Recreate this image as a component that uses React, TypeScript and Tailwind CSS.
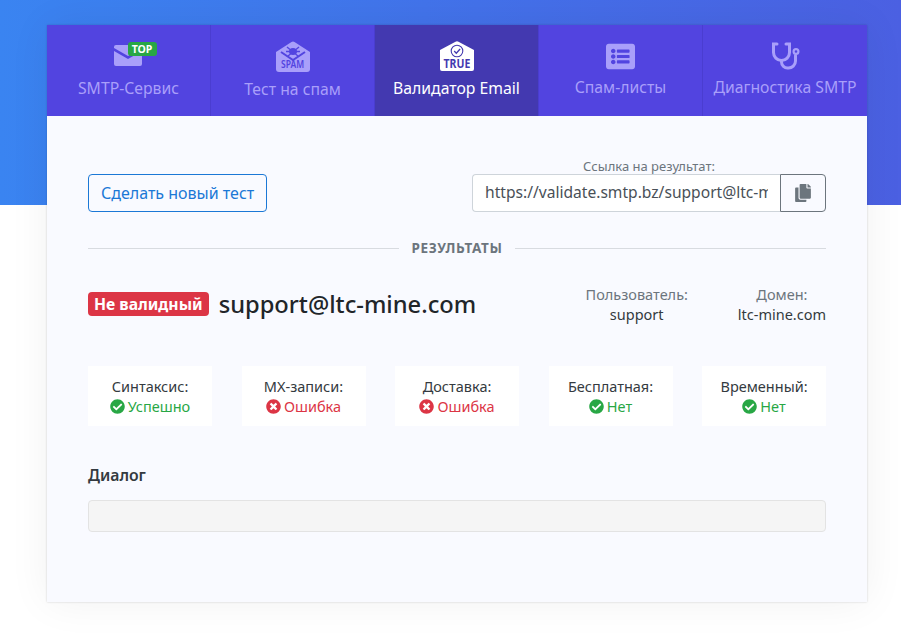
import { FaCheckCircle, FaTimesCircle, FaCopy, FaListAlt } from "react-icons/fa";

const font = { fontFamily: '"Noto Sans", sans-serif' };

function SmtpIcon() {
  return (
    <div className="relative h-[36px] w-[30px]">
      <svg viewBox="0 0 28 21" className="absolute left-0 top-[4px] h-[21px] w-[28px] fill-[#a99ffa]">
        <path d="M2 0h24a2 2 0 0 1 2 2v1L14 11 0 3V2a2 2 0 0 1 2-2z" />
        <path d="M0 6l14 8 14-8v13a2 2 0 0 1-2 2H2a2 2 0 0 1-2-2z" />
      </svg>
      <span className="absolute left-[14px] top-[1px] flex h-[14px] w-[29px] items-center justify-center rounded-[3px] bg-[#28a745] text-[10.5px] font-bold leading-none text-white">TOP</span>
    </div>
  );
}

function SpamIcon() {
  return (
    <div className="relative flex h-[31px] w-[34px] flex-col items-center justify-end">
      <svg viewBox="0 0 34 31" className="absolute left-0 top-0 h-[31px] w-[34px] fill-[#a99ffa]">
        <path d="M15.5 1a3 3 0 0 1 3 0L34 11v17a3 3 0 0 1-3 3H3a3 3 0 0 1-3-3V11z" />
        <path d="M5 11l12 8 12-8" fill="none" stroke="#5244e0" strokeWidth="2" />
        <ellipse cx="17" cy="10.5" rx="4" ry="3.6" fill="#5244e0" />
        <path d="M11 6l3 2.5M23 6l-3 2.5M10 10.5h4M24 10.5h-4M12 15l2.5-2M22 15l-2.5-2" stroke="#5244e0" strokeWidth="1.4" />
      </svg>
      <span className="relative mb-[3px] scale-x-[0.85] text-[10px] font-semibold leading-[10px] text-[#5244e0]">SPAM</span>
    </div>
  );
}

function TrueIcon() {
  return (
    <div className="relative flex h-[30px] w-[34px] flex-col items-center justify-end">
      <svg viewBox="0 0 34 30" className="absolute left-0 top-0 h-[30px] w-[34px] fill-white">
        <path d="M15.5 .8a3 3 0 0 1 3 0L34 9v19a2 2 0 0 1-2 2H2a2 2 0 0 1-2-2V9z" />
        <circle cx="17" cy="10" r="5.8" fill="none" stroke="#4339b0" strokeWidth="1.1" />
        <path d="M14.2 10l2.1 2.2 3.8-4.2" fill="none" stroke="#4339b0" strokeWidth="1.3" />
      </svg>
      <span className="relative mb-[1px] scale-x-[0.84] text-[12.5px] font-bold leading-[12px] text-[#4339b0]">TRUE</span>
    </div>
  );
}

function StethoscopeIcon() {
  return (
    <svg viewBox="0 0 29 28" fill="none" stroke="#a99ffa" strokeWidth="3" strokeLinecap="round" className="h-[28px] w-[29px]">
      <path d="M6 2H2.5v8.5a8 8 0 0 0 16 0V2H15" />
      <path d="M10.5 18.5v1.5a6 6 0 0 0 6.5 6 7 7 0 0 0 7.5-7v-5.5" />
      <circle cx="25" cy="9.5" r="2.4" strokeWidth="2.2" />
    </svg>
  );
}

const tabs = [
  { label: "SMTP-Сервис", icon: <SmtpIcon />, labelClass: "mt-[1px]" },
  { label: "Тест на спам", icon: <SpamIcon />, labelClass: "mt-[2px]" },
  { label: "Валидатор Email", icon: <TrueIcon />, labelClass: "mt-[1px]", active: true },
  { label: "Спам-листы", icon: <FaListAlt className="mt-[1px] h-[29px] w-[29px] text-[#a99ffa]" />, labelClass: "" },
  { label: "Диагностика SMTP", icon: <div className="mt-[1px]"><StethoscopeIcon /></div>, labelClass: "" },
];

const checks = [
  { label: "Синтаксис:", value: "Успешно", ok: true },
  { label: "MX-записи:", value: "Ошибка", ok: false },
  { label: "Доставка:", value: "Ошибка", ok: false },
  { label: "Бесплатная:", value: "Нет", ok: true },
  { label: "Временный:", value: "Нет", ok: true },
];

export default function App() {
  return (
    <div
      style={font}
      className="h-[641px] overflow-hidden bg-white bg-[linear-gradient(90deg,#3a84f1,#4b60e2)] bg-[length:100%_205px] bg-no-repeat px-[47px] pt-[25px]"
    >
      <div className="h-[577px] w-[820px] bg-[#f9faff] shadow-[0_0_2px_rgba(0,0,0,0.18),0_0_40px_rgba(0,0,0,0.06)]">
        <div className="grid h-[91px] grid-cols-5 bg-[#5244e0]">
          {tabs.map((t) => (
            <div
              key={t.label}
              className={`flex flex-col items-center border-r border-[#4a3dd0] pt-[16px] last:border-r-0 ${t.active ? "bg-[#4339b0]" : ""}`}
            >
              <div className="flex h-[36px] items-start justify-center">{t.icon}</div>
              <span className={`whitespace-nowrap text-[15.75px] leading-[20px] ${t.labelClass} ${t.active ? "text-white" : "text-[#a99ffa]"}`}>{t.label}</span>
            </div>
          ))}
        </div>

        <div className="px-[41px] pt-[42px]">
          <div className="flex items-end justify-between">
            <button className="h-[38px] rounded-[4px] border border-[#1b78d6] px-[12px] text-[16px] text-[#1b78d6]">Сделать новый тест</button>
            <div className="flex w-[354px] flex-col items-center">
              <span className="text-[13px] leading-[16px] text-[#6c757d]">Ссылка на результат:</span>
              <div className="flex h-[38px] w-full">
                <input
                  readOnly
                  value="https://validate.smtp.bz/support@ltc-mine.com"
                  className="min-w-0 flex-1 rounded-l-[4px] border border-r-0 border-[#ced4da] bg-white px-[12px] text-[15.6px] text-[#495057] outline-none"
                />
                <button className="flex w-[46px] items-center justify-center rounded-r-[4px] border border-[#6c757d] text-[#6c757d]">
                  <FaCopy className="h-[18px] w-[18px]" />
                </button>
              </div>
            </div>
          </div>

          <div className="mt-[27px] flex items-center gap-[13px]">
            <div className="h-px flex-1 bg-[#d8dbe0]" />
            <span className="text-[13.5px] font-bold leading-[18px] tracking-[0.6px] text-[#6c757d]">РЕЗУЛЬТАТЫ</span>
            <div className="h-px flex-1 bg-[#d8dbe0]" />
          </div>

          <div className="mt-[27px] flex items-start justify-between">
            <div className="mt-[6px] flex items-center">
              <span className="rounded-[4px] bg-[#dc3545] px-[6px] text-[15.7px] font-bold leading-[24px] text-white">Не валидный</span>
              <span className="ml-[10px] text-[23.7px] font-medium leading-[28px] text-[#212529]">support@ltc-mine.com</span>
            </div>
            <div className="flex gap-[50px] text-[14.5px] leading-[20px]">
              <div className="flex flex-col items-center">
                <span className="text-[#6c757d]">Пользователь:</span>
                <span className="text-[#343a40]">support</span>
              </div>
              <div className="flex flex-col items-center">
                <span className="text-[#6c757d]">Домен:</span>
                <span className="text-[#343a40]">ltc-mine.com</span>
              </div>
            </div>
          </div>

          <div className="mt-[42px] flex justify-between">
            {checks.map((c) => (
              <div key={c.label} className="flex h-[60px] w-[124px] flex-col items-center justify-center bg-white text-[14.5px] leading-[20px]">
                <span className="text-[#343a40]">{c.label}</span>
                <span className={`flex items-center gap-[3px] ${c.ok ? "text-[#28a745]" : "text-[#dc3545]"}`}>
                  {c.ok ? <FaCheckCircle className="h-[15px] w-[15px]" /> : <FaTimesCircle className="h-[15px] w-[15px]" />}
                  {c.value}
                </span>
              </div>
            ))}
          </div>

          <div className="mt-[39px] text-[15.75px] font-semibold leading-[20px] text-[#343a40]">Диалог</div>
          <div className="mt-[15px] h-[32px] rounded-[4px] border border-[#e3e3e3] bg-[#f5f5f5]" />
        </div>
      </div>
    </div>
  );
}
